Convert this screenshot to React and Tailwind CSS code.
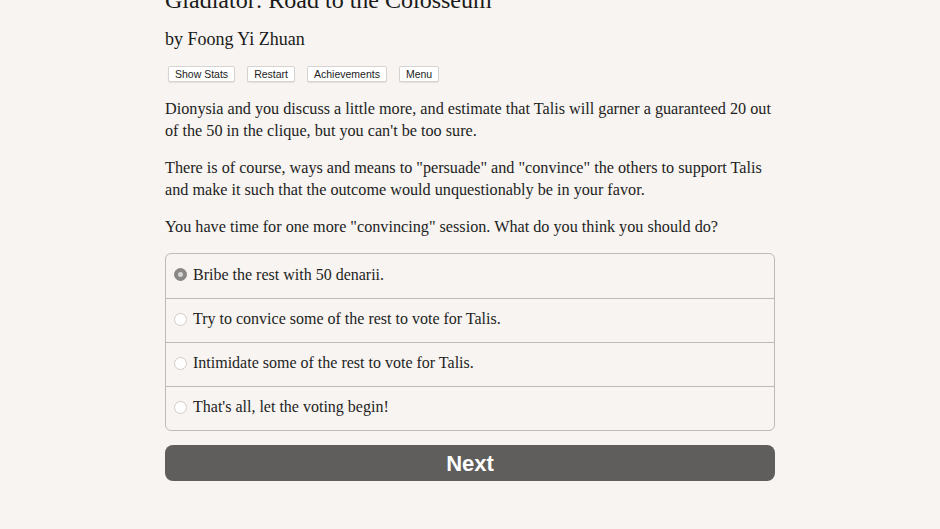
import { useState } from 'react'

const choices = [
  'Bribe the rest with 50 denarii.',
  'Try to convice some of the rest to vote for Talis.',
  'Intimidate some of the rest to vote for Talis.',
  "That's all, let the voting begin!",
]

export default function App() {
  const [picked, setPicked] = useState(0)

  return (
    <div className="min-h-[529px] w-full bg-[#f7f4f1] text-[#222]" style={{ fontFamily: '"Liberation Serif", "DejaVu Serif", serif' }}>
      <div className="mx-auto w-[610px] pb-12 -mt-[14px]">
        {/* ── HEADER ── */}
        <h1 className="text-[24px] leading-[28px] text-[#1a1a1a]">Gladiator: Road to the Colosseum</h1>
        <h2 className="mt-[14px] text-[18px] leading-[22px] text-[#1a1a1a]">by Foong Yi Zhuan</h2>

        <div className="mt-[16px] flex gap-[12px] pl-[3px]" style={{ fontFamily: '"Liberation Sans", Arial, sans-serif' }}>
          {['Show Stats', 'Restart', 'Achievements', 'Menu'].map(b => (
            <button key={b} className="h-[16px] rounded-[2px] border border-[#d6d3d0] bg-white px-[6px] text-[10.5px] leading-[14px] text-[#222] shadow-[0_1px_1px_rgba(0,0,0,0.08)]">
              {b}
            </button>
          ))}
        </div>

        {/* ── TEXTO ── */}
        <div className="mt-[16px] text-[16.2px] leading-[22px] text-[#1e1e1e]">
          <p>Dionysia and you discuss a little more, and estimate that Talis will garner a guaranteed 20 out of the 50 in the clique, but you can't be too sure.</p>
          <p className="mt-[15px]">There is of course, ways and means to "persuade" and "convince" the others to support Talis and make it such that the outcome would unquestionably be in your favor.</p>
          <p className="mt-[15px]">You have time for one more "convincing" session. What do you think you should do?</p>
        </div>

        {/* ── CHOICES ── */}
        <div className="mt-[15px] rounded-[6px] border border-[#bdbab7] bg-[#f7f4f1]">
          {choices.map((c, i) => (
            <label key={c} onClick={() => setPicked(i)}
              className={`flex h-[44px] cursor-pointer items-center gap-[6px] pb-[3px] pl-[8px] text-[16px] text-[#1e1e1e] ${i > 0 ? 'border-t border-[#bdbab7]' : ''}`}
            >
              <span className={`flex h-[13px] w-[13px] items-center justify-center rounded-full border ${picked === i ? 'border-[#8a8886] bg-[#8a8886]' : 'border-[#cfccc9] bg-white'}`}>
                {picked === i && <span className="h-[5px] w-[5px] rounded-full bg-[#d8d6d4]" />}
              </span>
              {c}
            </label>
          ))}
        </div>

        <button className="mt-[14px] h-[36px] w-full rounded-[8px] bg-[#5f5e5c] text-[22px] font-bold text-white" style={{ fontFamily: '"Liberation Sans", Arial, sans-serif' }}>
          Next
        </button>
      </div>
    </div>
  )
}
